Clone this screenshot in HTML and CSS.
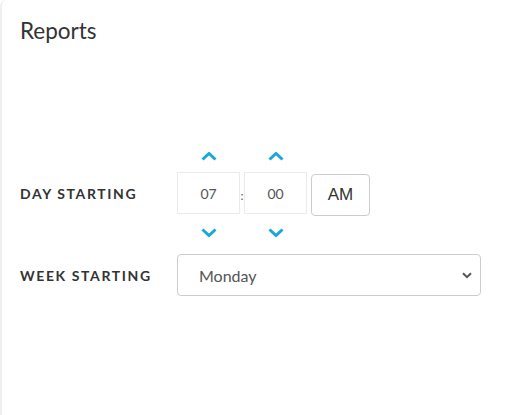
FILE: index.html
```html
<!DOCTYPE html>
<html>
<head>
<meta charset="utf-8">
<link rel="stylesheet" href="styles.css">
</head>
<body>
<div class="card">
  <h1 class="title">Reports</h1>
  <div class="form">
    <div class="label label-day">DAY STARTING</div>
    <div class="time-picker">
      <div class="time-col">
        <svg class="chev chev-up" width="16" height="9" viewBox="0 0 16 9"><path d="M1.5 7.5 L8 1.5 L14.5 7.5" fill="none" stroke="#17a9d9" stroke-width="3"/></svg>
        <div class="time-box">07</div>
        <svg class="chev chev-down" width="16" height="9" viewBox="0 0 16 9"><path d="M1.5 1.5 L8 7.5 L14.5 1.5" fill="none" stroke="#17a9d9" stroke-width="3"/></svg>
      </div>
      <div class="colon">:</div>
      <div class="time-col">
        <svg class="chev chev-up" width="16" height="9" viewBox="0 0 16 9"><path d="M1.5 7.5 L8 1.5 L14.5 7.5" fill="none" stroke="#17a9d9" stroke-width="3"/></svg>
        <div class="time-box">00</div>
        <svg class="chev chev-down" width="16" height="9" viewBox="0 0 16 9"><path d="M1.5 1.5 L8 7.5 L14.5 1.5" fill="none" stroke="#17a9d9" stroke-width="3"/></svg>
      </div>
      <div class="ampm">AM</div>
    </div>
    <div class="label">WEEK STARTING</div>
    <div class="select-box">
      <span class="select-text">Monday</span>
      <svg width="10" height="7" viewBox="0 0 10 7"><path d="M1 1.2 L5 5.2 L9 1.2" fill="none" stroke="#555" stroke-width="2"/></svg>
    </div>
  </div>
</div>
</body>
</html>
```
FILE: styles.css
```css
html, body {
  margin: 0;
  padding: 0;
  background: #fff;
}
body {
  font-family: Lato, "Noto Sans", sans-serif;
  color: #333;
}
.card {
  box-sizing: border-box;
  width: 520px;
  height: 430px;
  border-left: 2px solid #efefef;
  border-top-left-radius: 6px;
  padding: 15px 0 0 18px;
}
.title {
  margin: 0;
  font-size: 22.5px;
  font-weight: 400;
  line-height: 31px;
  color: #333;
}
.form {
  margin-top: 106px;
  display: grid;
  grid-template-columns: 157px 304px;
  row-gap: 17px;
  align-items: center;
}
.label {
  font-size: 14px;
  font-weight: 700;
  letter-spacing: 1.6px;
  color: #333;
}
.label-day {
  padding-bottom: 3px;
}
.time-picker {
  display: flex;
  align-items: center;
}
.time-col {
  display: flex;
  flex-direction: column;
  align-items: center;
}
.chev {
  display: block;
}
.chev-up {
  margin-bottom: 11px;
}
.chev-down {
  margin-top: 14px;
}
.time-box {
  box-sizing: border-box;
  width: 63px;
  height: 42px;
  border: 1px solid #ebebeb;
  display: flex;
  align-items: center;
  justify-content: center;
  font-size: 14px;
  color: #555;
}
.colon {
  width: 4px;
  font-size: 12px;
  color: #555;
  text-align: center;
  margin-top: 2px;
}
.ampm {
  box-sizing: border-box;
  width: 59px;
  height: 42px;
  margin-left: 4px;
  border: 1px solid #ccc;
  border-radius: 4px;
  display: flex;
  align-items: center;
  justify-content: center;
  font-family: "Liberation Sans", Arial, sans-serif;
  font-size: 17px;
  color: #333;
}
.select-box {
  box-sizing: border-box;
  height: 42px;
  border: 1px solid #ccc;
  border-radius: 4px;
  display: flex;
  align-items: center;
  justify-content: space-between;
  padding: 0 8px 0 21px;
}
.select-text {
  font-size: 16px;
  color: #555;
}
```
